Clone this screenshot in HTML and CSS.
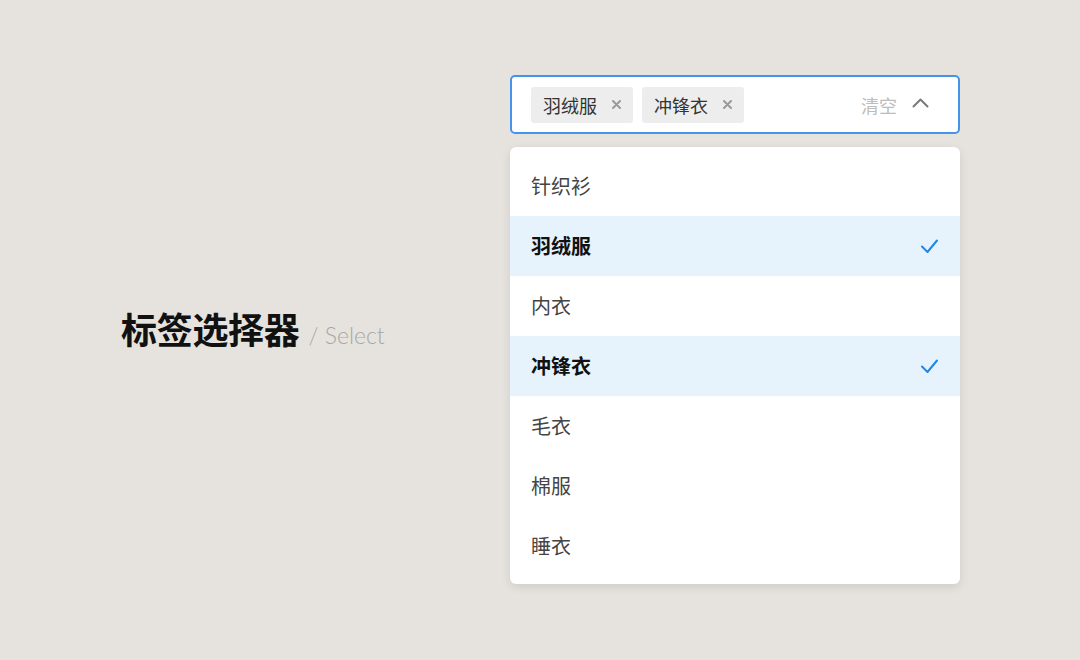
FILE: index.html
```html
<!DOCTYPE html>
<html lang="zh">
<head>
<meta charset="utf-8">
<title>标签选择器</title>
<link rel="stylesheet" href="styles.css">
</head>
<body>
<div class="page">
  <div class="heading">
    <span class="title">标签选择器</span>
    <span class="subtitle">/ Select</span>
  </div>
  <div class="select-col">
    <div class="select">
      <div class="tag"><span class="tag-text">羽绒服</span>
        <svg class="tag-x" width="9" height="9" viewBox="0 0 9 9"><path d="M1 1L8 8M8 1L1 8" stroke="#9a9a9a" stroke-width="2" stroke-linecap="round"/></svg>
      </div>
      <div class="tag"><span class="tag-text">冲锋衣</span>
        <svg class="tag-x" width="9" height="9" viewBox="0 0 9 9"><path d="M1 1L8 8M8 1L1 8" stroke="#9a9a9a" stroke-width="2" stroke-linecap="round"/></svg>
      </div>
      <span class="spacer"></span>
      <span class="clear">清空</span>
      <svg class="chev" width="17" height="10" viewBox="0 0 17 10"><path d="M1.5 8.5L8.5 1.5L15.5 8.5" fill="none" stroke="#7a7a7a" stroke-width="2" stroke-linecap="round" stroke-linejoin="round"/></svg>
    </div>
    <ul class="menu">
      <li class="item">针织衫</li>
      <li class="item selected">羽绒服<svg class="check" width="18" height="16" viewBox="0 0 18 16"><path d="M2 8.5L7.5 14L17 2.5" fill="none" stroke="#1e87e8" stroke-width="2" stroke-linecap="round" stroke-linejoin="round"/></svg></li>
      <li class="item">内衣</li>
      <li class="item selected">冲锋衣<svg class="check" width="18" height="16" viewBox="0 0 18 16"><path d="M2 8.5L7.5 14L17 2.5" fill="none" stroke="#1e87e8" stroke-width="2" stroke-linecap="round" stroke-linejoin="round"/></svg></li>
      <li class="item">毛衣</li>
      <li class="item">棉服</li>
      <li class="item">睡衣</li>
    </ul>
  </div>
</div>
</body>
</html>
```
FILE: styles.css
```css
html, body {
  margin: 0;
  padding: 0;
}
body {
  background: #e6e3df;
  font-family: "Noto Sans CJK SC", "Noto Sans", sans-serif;
  width: 1080px;
  height: 660px;
  overflow: hidden;
}
.page {
  display: flex;
  align-items: center;
  padding: 75px 0 0 121px;
}
.heading {
  width: 389px;
  display: flex;
  align-items: baseline;
  margin-top: -3px;
}
.title {
  font-size: 36px;
  font-weight: 700;
  color: #111;
  letter-spacing: -0.3px;
}
.subtitle {
  font-family: Lato, "Open Sans", sans-serif;
  font-weight: 300;
  font-size: 23px;
  color: #a9a7a4;
  margin-left: 9px;
  letter-spacing: 0;
}
.select-col {
  width: 450px;
  display: flex;
  flex-direction: column;
}
.select {
  box-sizing: border-box;
  height: 59px;
  border: 2px solid #4493ec;
  border-radius: 5px;
  background: #fff;
  display: flex;
  align-items: center;
  padding: 0 29px 0 19px;
}
.tag {
  box-sizing: border-box;
  height: 36px;
  width: 102px;
  background: #ededed;
  border-radius: 3px;
  display: flex;
  align-items: center;
  padding: 0 12px;
  margin-right: 9px;
}
.tag-text {
  font-size: 18px;
  color: #333;
  line-height: 1;
}
.tag-x {
  margin-left: auto;
}
.spacer {
  flex: 1;
}
.clear {
  font-size: 18px;
  color: #bcbcbc;
  margin-right: 15px;
}
.chev {
  display: block;
  margin-top: -3px;
}
.menu {
  list-style: none;
  margin: 13px 0 0;
  padding: 9px 0 8px;
  background: #fff;
  border-radius: 6px;
  box-shadow: 0 3px 10px rgba(0, 0, 0, 0.10);
}
.item {
  height: 60px;
  display: flex;
  align-items: center;
  padding: 0 22px 0 21px;
  font-size: 20px;
  line-height: 1;
  color: #444;
}
.item.selected {
  background: #e6f2fc;
  font-weight: 700;
  color: #111;
}
.check {
  margin-left: auto;
}
```
